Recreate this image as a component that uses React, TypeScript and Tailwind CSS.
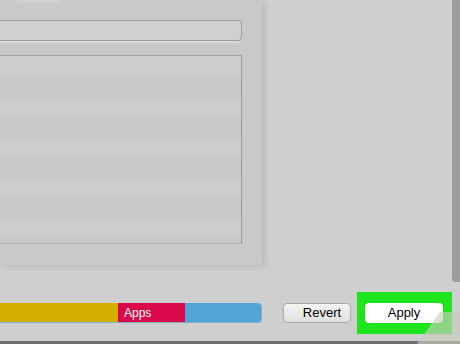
import React from 'react';

const stripes = Array.from({ length: 11 }, (_, i) => i);

const App: React.FC = () => {
  return (
    <div className="relative w-[460px] h-[344px] overflow-hidden bg-[#cfcfcf] flex flex-col font-['Liberation_Sans',Arial,sans-serif]">
      {/* top area: settings pane + scrollbar */}
      <div className="flex h-[282px] shrink-0">
        <div className="w-[262px] h-[265px] bg-[#c9c9c9] shadow-[3px_2px_6px_rgba(0,0,0,0.1)] flex flex-col pr-[20px]">
          <div className="ml-[17px] w-[45px] h-[3px] bg-[#d0d0d0] rounded-b-sm" />
          <div className="mt-[17px] h-[21px] w-[242px] bg-[#d0d0d0] border border-l-0 border-[#9c9c9c] rounded-r-[4px] shadow-[0_2px_2px_rgba(255,255,255,0.3)]" />
          <div className="mt-[14px] h-[189px] w-[242px] border border-l-0 border-t-[#a3a3a3] border-r-[#9a9a9a] border-b-[#b0b0b0] overflow-hidden">
            <div className="flex flex-col blur-[2px] -mx-[4px]">
              <div className="h-[22px] shrink-0 bg-[#cdcdcd]" />
              {stripes.map((i) => (
                <div
                  key={i}
                  className={`h-[20px] shrink-0 ${i % 2 === 0 ? 'bg-[#c6c6c6]' : 'bg-[#cdcdcd]'}`}
                />
              ))}
            </div>
          </div>
        </div>
        <div className="flex-1" />
        <div className="w-[8px] h-[282px] bg-[#9d9d9d] rounded-bl-[3px]" />
      </div>

      {/* bottom row: storage bar + buttons */}
      <div className="flex items-start pt-[10px] h-[59px]">
        <div className="mt-[11px] w-[262px] h-[20px] flex rounded-r-[4px] overflow-hidden border-r border-b border-[#3f86b3]/50 text-[12px] text-white">
          <div className="w-[118px] bg-[#d4b000]" />
          <div className="w-[67px] bg-[#d9084a] pl-[6px] flex items-center">Apps</div>
          <div className="flex-1 bg-[#52a6d6]" />
        </div>
        <button className="ml-[21px] mt-[11px] w-[68px] h-[20px] rounded-[4px] border border-[#a8a8a8] bg-gradient-to-b from-[#f4f4f4] to-[#e0e0e0] text-[13px] text-black flex items-center justify-center pl-[10px]">
          Revert
        </button>
        <div className="ml-[6px] w-[95px] h-[42px] bg-[#1ee41e] pl-[8px] pt-[11px]">
          <button className="w-[78px] h-[20px] rounded-[4px] bg-white shadow-[0_0_1px_rgba(0,0,0,0.4)] text-[13px] text-black flex items-center justify-center">
            Apply
          </button>
        </div>
      </div>

      <div className="mt-auto h-[3px] bg-[#707070]" />

      {/* translucent pointer overlay */}
      <svg className="absolute left-0 top-0" width="460" height="344" viewBox="0 0 460 344">
        <polygon points="417,344 440,312 460,312 460,344" fill="#c8ccbc" fillOpacity="0.65" />
      </svg>
    </div>
  );
};

export default App;
